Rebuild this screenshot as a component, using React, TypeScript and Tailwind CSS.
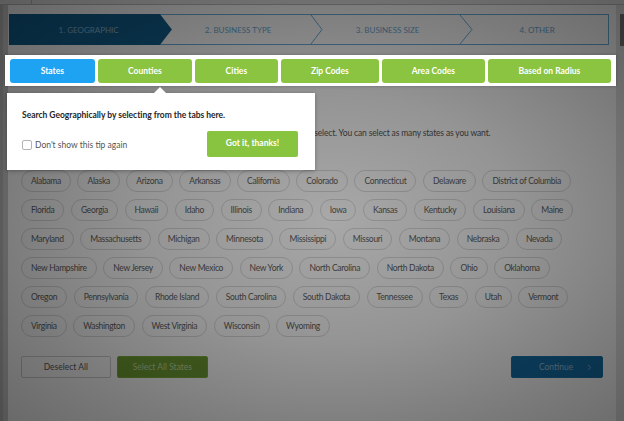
import React from 'react';
import { ChevronRight } from 'lucide-react';

const steps = ['1. Geographic', '2. Business Type', '3. Business Size', '4. Other'];

const tabs = [
  { label: 'States', width: 'w-[85px]', active: true },
  { label: 'Counties', width: 'w-[94px]' },
  { label: 'Cities', width: 'w-[83px]' },
  { label: 'Zip Codes', width: 'w-[98px]' },
  { label: 'Area Codes', width: 'w-[103px]' },
  { label: 'Based on Radius', width: 'w-[123px]' },
];

const stateRows = [
  ['Alabama', 'Alaska', 'Arizona', 'Arkansas', 'California', 'Colorado', 'Connecticut', 'Delaware', 'District of Columbia'],
  ['Florida', 'Georgia', 'Hawaii', 'Idaho', 'Illinois', 'Indiana', 'Iowa', 'Kansas', 'Kentucky', 'Louisiana', 'Maine'],
  ['Maryland', 'Massachusetts', 'Michigan', 'Minnesota', 'Mississippi', 'Missouri', 'Montana', 'Nebraska', 'Nevada'],
  ['New Hampshire', 'New Jersey', 'New Mexico', 'New York', 'North Carolina', 'North Dakota', 'Ohio', 'Oklahoma'],
  ['Oregon', 'Pennsylvania', 'Rhode Island', 'South Carolina', 'South Dakota', 'Tennessee', 'Texas', 'Utah', 'Vermont'],
  ['Virginia', 'Washington', 'West Virginia', 'Wisconsin', 'Wyoming'],
];

function StepBar() {
  return (
    <div className="relative ml-[1px] mt-[9px] h-[31px] w-[600px] border border-[#6aaedb]">
      {/* active step fill */}
      <div className="absolute -inset-[1px] bg-[#11608f] [clip-path:polygon(0_0,151px_0,163px_50%,151px_100%,0_100%)]" />
      <svg className="absolute inset-0 h-full w-full" viewBox="0 0 598 29" preserveAspectRatio="none">
        <polyline points="301,0 312,14.5 301,29" fill="none" stroke="#6aaedb" strokeWidth="1" />
        <polyline points="450,0 462,14.5 450,29" fill="none" stroke="#6aaedb" strokeWidth="1" />
      </svg>
      <div className="relative flex h-full">
        {steps.map((s, i) => (
          <div
            key={s}
            className={`flex flex-1 items-center justify-center pl-[8px] text-[8px] uppercase ${
              i === 0 ? 'text-[#8ab8d8]' : 'text-[#6ca9d4]'
            }`}
          >
            {s}
          </div>
        ))}
      </div>
    </div>
  );
}

function Tabs() {
  return (
    <div className="relative z-20 -ml-[3px] mt-[10px] flex h-[31px] w-[611px] gap-[3px] bg-white pl-[5px] pt-[4px] shadow-[0_0_3px_rgba(0,0,0,0.25)]">
      {tabs.map((t) => (
        <div
          key={t.label}
          className={`flex h-[24px] items-center justify-center rounded-[3px] text-[8.5px] font-bold text-white ${t.width} ${
            t.active ? 'bg-[#1ea3f3]' : 'bg-[#8bc440]'
          }`}
        >
          {t.label}
        </div>
      ))}
    </div>
  );
}

function Tooltip() {
  return (
    <div className="absolute left-[7px] top-[93px] z-30 h-[77px] w-[308px] bg-white shadow-[0_1px_4px_rgba(0,0,0,0.3)]">
      <div className="absolute -top-[6px] left-[147px] h-0 w-0 border-x-[6px] border-b-[6px] border-x-transparent border-b-white" />
      <p className="ml-[15px] mt-[16px] text-[8.5px] font-bold tracking-[-0.02px] text-[#262626]">
        Search Geographically by selecting from the tabs here.
      </p>
      <div className="mt-[12px] flex items-center pl-[15px] pr-[17px]">
        <span className="h-[10px] w-[10px] rounded-[2px] border border-[#b4b4b4] bg-white" />
        <span className="ml-[3px] text-[8.5px] text-[#555]">Don&apos;t show this tip again</span>
        <button className="ml-auto -mt-[3px] h-[26px] w-[91px] rounded-[2px] bg-[#88c440] text-[8.5px] font-bold text-white">
          Got it, thanks!
        </button>
      </div>
    </div>
  );
}

export default function App() {
  return (
    <div className="relative flex h-[421px] w-[624px] flex-col overflow-hidden bg-[#d0d0d0] font-['Lato',sans-serif]">
      <div className="flex h-[5px] shrink-0 border-b border-[#bdbdbd] bg-[#e6e6e6]">
        <div className="w-[32px] border-r border-[#bdbdbd]" />
      </div>
      <div className="flex flex-1">
        <div className="w-[9px] border-l-[3px] border-[#bcbcbc] bg-[#cfcfcf]" />
        <main className="flex-1 bg-white">
          <StepBar />
          <Tabs />

          <div className="px-[13px]">
            <p className="mt-[41px] h-[12px] whitespace-nowrap text-[8.5px] leading-[12px] tracking-[-0.15px] text-[#555]">
              Choose the target area by clicking on all of the states below that you would like to select. You can select as many states as you want.
            </p>

            <div className="mt-[31px] flex flex-col gap-[7px]">
              {stateRows.map((row, i) => (
                <div key={i} className="flex gap-[6.5px]">
                  {row.map((st) => (
                    <span
                      key={st}
                      className="flex h-[22px] items-center rounded-full border border-[#dcdcdc] px-[9px] text-[8.5px] tracking-[-0.3px] text-[#5e5e5e]"
                    >
                      {st}
                    </span>
                  ))}
                </div>
              ))}
            </div>

            <div className="mt-[19px] flex items-center">
              <button className="h-[22px] w-[90px] rounded-[2px] border border-[#cfcfcf] text-[8.5px] text-[#5c5c5c]">
                Deselect All
              </button>
              <button className="ml-[6px] h-[22px] w-[91px] rounded-[2px] border border-[#7aad3c] bg-[#6f9d33] text-[8.5px] text-[#c2dca6]">
                Select All States
              </button>
              <button className="ml-auto flex h-[22px] w-[92px] items-center rounded-[2px] border border-[#1874ad] bg-[#146ea6] pl-[27px] pr-[8px] text-[8.5px] text-[#95bfdc]">
                Continue
                <ChevronRight className="ml-auto h-[9px] w-[9px]" strokeWidth={2} />
              </button>
            </div>
          </div>
        </main>
        <div className="flex w-[10px] justify-end bg-[#e4e4e4] pt-[9px]">
          <div className="h-[32px] w-[4px] bg-[#7a7a7a]" />
        </div>
      </div>

      {/* dimmed backdrop of the guided tour */}
      <div className="pointer-events-none absolute inset-0 z-10 bg-[radial-gradient(ellipse_at_53%_52%,rgba(0,0,0,0.34)_0%,rgba(0,0,0,0.42)_40%,rgba(0,0,0,0.52)_72%,rgba(0,0,0,0.6)_100%)]" />

      <Tooltip />
    </div>
  );
}
